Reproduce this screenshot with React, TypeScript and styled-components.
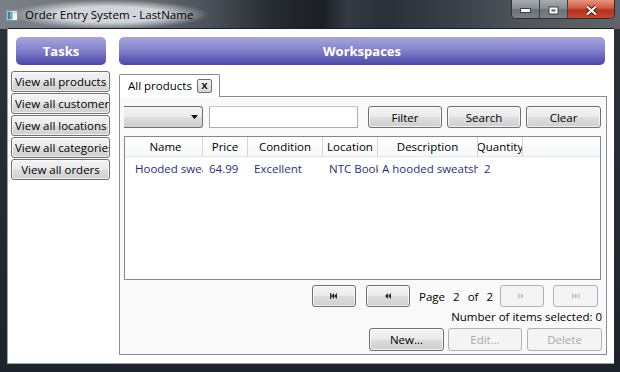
import React from "react";
import styled, { createGlobalStyle } from "styled-components";

const GlobalStyle = createGlobalStyle`
  * { box-sizing: border-box; }
  html, body { margin: 0; padding: 0; background: #1f262e; }
  body { font-family: "Open Sans", "Noto Sans", sans-serif; font-size: 11px; color: #000; }
`;

type Column = { title: string; width: number; pad: number };

const columns: Column[] = [
  { title: "Name", width: 74, pad: 6 },
  { title: "Price", width: 45, pad: 6 },
  { title: "Condition", width: 75, pad: 6 },
  { title: "Location", width: 55, pad: 6 },
  { title: "Description", width: 100, pad: 4 },
  { title: "Quantity", width: 45, pad: 6 },
];

const products = [
  ["Hooded sweatshirt", "64.99", "Excellent", "NTC Bookstore", "A hooded sweatshirt", "2"],
];

const tasks = [
  "View all products",
  "View all customers",
  "View all locations",
  "View all categories",
  "View all orders",
];

const PageIcon = ({ dir, bar, disabled }: { dir: "left" | "right"; bar: boolean; disabled?: boolean }) => {
  const c = disabled ? "#c4c4c4" : "#2a2a2a";
  const tri = dir === "left"
    ? ["M4 0 L4 6 L1 3 Z", "M7 0 L7 6 L4 3 Z"]
    : ["M0 0 L0 6 L3 3 Z", "M3 0 L3 6 L6 3 Z"];
  return (
    <svg width="8" height="6" viewBox="0 0 8 6">
      {tri.map((d) => <path key={d} d={d} fill={c} />)}
      {bar && <rect x={dir === "left" ? 0 : 6.5} y="0" width="1.2" height="6" fill={c} />}
    </svg>
  );
};

const App = () => {
  return (
    <>
      <GlobalStyle />
      <Window>
        <TitleBar>
          <AppIcon>
            <svg width="12" height="11" viewBox="0 0 12 11">
              <rect x="0.5" y="0.5" width="11" height="10" fill="#f4f6f8" stroke="#8a9096" />
              <rect x="1.5" y="1.5" width="3" height="8" fill="#3a7fb4" />
              <rect x="4.5" y="1.5" width="2" height="8" fill="#5fae8a" />
              <rect x="7" y="1.5" width="4" height="2" fill="#c9d3dc" />
            </svg>
          </AppIcon>
          <TitleText>Order Entry System - LastName</TitleText>
          <Caption>
            <CaptionButton>
              <svg width="11" height="5" viewBox="0 0 11 5">
                <rect x="0.5" y="0.5" width="10" height="4" fill="#fff" stroke="#3a4046" />
              </svg>
            </CaptionButton>
            <CaptionButton>
              <svg width="11" height="9" viewBox="0 0 11 9">
                <rect x="0.5" y="0.5" width="10" height="8" fill="#3a4046" />
                <rect x="1.5" y="1.5" width="8" height="6" fill="#fff" />
                <rect x="3.5" y="3.5" width="4" height="2" fill="#56606a" />
              </svg>
            </CaptionButton>
            <CloseButton>
              <svg width="13" height="11" viewBox="0 0 13 11">
                <path d="M2 1.5 L11 9.5 M11 1.5 L2 9.5" stroke="#4a1a10" strokeWidth="4" />
                <path d="M2 1.5 L11 9.5 M11 1.5 L2 9.5" stroke="#fff" strokeWidth="2.2" />
              </svg>
            </CloseButton>
          </Caption>
        </TitleBar>

        <Client>
          <TaskColumn>
            <Header $inset>Tasks</Header>
            <TaskList>
              {tasks.map((t) => (
                <Button key={t} $width={99} $height={21}>
                  <Label>{t}</Label>
                </Button>
              ))}
            </TaskList>
          </TaskColumn>

          <WorkColumn>
            <Header>Workspaces</Header>
            <TabStrip>
              <Tab>
                All products
                <TabClose>X</TabClose>
              </Tab>
            </TabStrip>
            <TabPanel>
              <FilterRow>
                <Combo>
                  <svg width="7" height="4" viewBox="0 0 7 4"><path d="M0 0 H7 L3.5 4 Z" fill="#000" /></svg>
                </Combo>
                <TextBox />
                <Button $width={74} $height={22} $ml={10}>Filter</Button>
                <Button $width={74} $height={22} $ml={5}>Search</Button>
                <Button $width={75} $height={22} $ml={5}>Clear</Button>
              </FilterRow>

              <Grid>
                <HeaderRow>
                  {columns.map((c) => (
                    <HeaderCell key={c.title} $width={c.width}>{c.title}</HeaderCell>
                  ))}
                </HeaderRow>
                {products.map((p) => (
                  <DataRow key={p[0]}>
                    {columns.map((c, i) => (
                      <DataCell key={c.title} $width={c.width} $pad={c.pad}>{p[i]}</DataCell>
                    ))}
                  </DataRow>
                ))}
              </Grid>

              <PagerRow>
                <Button $width={44} $height={22}><PageIcon dir="left" bar /></Button>
                <Button $width={44} $height={22} $ml={10}><PageIcon dir="left" bar={false} /></Button>
                <PageLabel>
                  <span>Page</span><span>2</span><span>of</span><span>2</span>
                </PageLabel>
                <Button $width={44} $height={22} disabled><PageIcon dir="right" bar={false} disabled /></Button>
                <Button $width={45} $height={22} $ml={9} disabled><PageIcon dir="right" bar disabled /></Button>
              </PagerRow>

              <SelectedCount>Number of items selected: 0</SelectedCount>

              <ActionRow>
                <Button $width={75} $height={23}>New...</Button>
                <Button $width={74} $height={23} $ml={4} disabled>Edit...</Button>
                <Button $width={75} $height={23} $ml={5} disabled>Delete</Button>
              </ActionRow>
            </TabPanel>
          </WorkColumn>
        </Client>
      </Window>
    </>
  );
};

export default App;

const Window = styled.div`
  width: 620px;
  height: 372px;
  display: flex;
  flex-direction: column;
  padding: 0 6px 8px 7px;
  background:
    linear-gradient(90deg, #7c8187 0%, #6a7076 22%, #4a5057 34%, #262b31 44%, #1b1f25 52%, #353b42 56%, #2a3037 62%, #3d434a 75%, #50565c 85%, #5e646a 100%) top / 100% 29px no-repeat,
    linear-gradient(180deg, #2b323a 0%, #1d242c 100%);
`;

const TitleBar = styled.div`
  height: 29px;
  display: flex;
  align-items: center;
  flex-shrink: 0;
`;

const AppIcon = styled.div`
  display: flex;
  margin-left: -1px;
  margin-top: 1px;
`;

const TitleText = styled.span`
  margin-left: -8px;
  padding: 7px 16px 7px 15px;
  font-family: "Open Sans", sans-serif;
  font-size: 11.5px;
  color: #000;
  background: radial-gradient(closest-side, rgba(214, 218, 222, 0.95) 55%, rgba(214, 218, 222, 0) 100%);
`;

const Caption = styled.div`
  margin-left: auto;
  margin-right: -1px;
  align-self: flex-start;
  display: flex;
  height: 19px;
  border: 1px solid #2b3036;
  border-top: none;
  border-radius: 0 0 5px 5px;
  overflow: hidden;
  box-shadow: inset 0 0 0 1px rgba(255, 255, 255, 0.25);
`;

const CaptionButton = styled.div`
  width: 28px;
  display: flex;
  align-items: center;
  justify-content: center;
  padding-top: 2px;
  background: linear-gradient(180deg, #a7acb1 0%, #8a9096 45%, #6b7177 55%, #7c8288 100%);
  border-right: 1px solid #3a4046;
`;

const CloseButton = styled(CaptionButton)`
  width: 46px;
  border-right: none;
  background: linear-gradient(180deg, #e6957f 0%, #cf5a3e 45%, #b3321b 55%, #c5472c 100%);
`;

const Client = styled.div`
  flex: 1;
  display: flex;
  gap: 9px;
  padding: 8px 7px 0 3px;
  background: #fff;
  border-left: 1px solid #9aa2aa;
  border-bottom: 1px solid #9aa2aa;
  border-top: 1px solid #1a1e23;
  margin-top: -1px;
`;

const TaskColumn = styled.div`
  width: 99px;
  display: flex;
  flex-direction: column;
`;

const Header = styled.div<{ $inset?: boolean }>`
  height: 28px;
  margin: ${(p) => (p.$inset ? "0 4px 0 5px" : "0 2px 0 0")};
  display: flex;
  align-items: center;
  justify-content: center;
  border-radius: 5px;
  background: linear-gradient(180deg, #a6a6de 0%, #8584cc 45%, #5f5cb5 80%, #4c48aa 100%);
  color: #fff;
  font-weight: 700;
  font-size: 13px;
  font-family: "Open Sans", sans-serif;
`;

const TaskList = styled.div`
  margin-top: 6px;
  display: flex;
  flex-direction: column;
  gap: 1px;
`;

const Button = styled.button<{ $width: number; $height: number; $ml?: number }>`
  width: ${(p) => p.$width}px;
  height: ${(p) => p.$height}px;
  margin: 0 0 0 ${(p) => p.$ml ?? 0}px;
  padding: 0;
  flex-shrink: 0;
  display: flex;
  align-items: center;
  justify-content: center;
  overflow: hidden;
  white-space: nowrap;
  font-family: "Open Sans", sans-serif;
  font-size: 11.5px;
  color: #000;
  border: 1px solid #707070;
  border-radius: 3px;
  background: linear-gradient(180deg, #f3f3f3 0%, #ebebeb 48%, #dddddd 52%, #cfcfcf 100%);
  box-shadow: inset 0 0 0 1px rgba(255, 255, 255, 0.7);

  &:disabled {
    color: #a8a8a8;
    border-color: #adb2b5;
    background: #f4f4f4;
    box-shadow: none;
  }
`;

const Label = styled.span`
  display: block;
  width: 100%;
  padding: 0 3px;
  text-align: center;
  overflow: hidden;
  white-space: nowrap;
`;

const WorkColumn = styled.div`
  flex: 1;
  display: flex;
  flex-direction: column;
`;

const TabStrip = styled.div`
  margin-top: 9px;
  display: flex;
  height: 22px;
`;

const Tab = styled.div`
  position: relative;
  z-index: 1;
  width: 101px;
  height: 23px;
  display: flex;
  align-items: center;
  padding: 0 0 1px 8px;
  gap: 5px;
  font-size: 11.5px;
  border: 1px solid #898c95;
  border-bottom: none;
  border-radius: 2px 2px 0 0;
  background: #fff;
`;

const TabClose = styled.span`
  width: 15px;
  height: 14px;
  display: flex;
  align-items: center;
  justify-content: center;
  font-weight: 700;
  font-size: 9px;
  border: 1px solid #707070;
  border-radius: 2px;
  background: linear-gradient(180deg, #f3f3f3 0%, #e6e6e6 50%, #d5d5d5 100%);
`;

const TabPanel = styled.div`
  height: 259px;
  display: flex;
  flex-direction: column;
  padding: 9px 4px 3px 4px;
  border: 1px solid #898c95;
  background: #f9f9f9;
`;

const FilterRow = styled.div`
  display: flex;
  height: 22px;
`;

const Combo = styled.div`
  width: 79px;
  height: 22px;
  display: flex;
  align-items: center;
  justify-content: flex-end;
  padding-right: 4px;
  border: 1px solid #707070;
  border-left: none;
  border-radius: 0 3px 3px 0;
  background: linear-gradient(180deg, #f3f3f3 0%, #ebebeb 48%, #dddddd 52%, #cfcfcf 100%);
`;

const TextBox = styled.div`
  width: 149px;
  margin-left: 6px;
  height: 22px;
  border: 1px solid #abadb3;
  border-top-color: #c5c8cf;
  background: #fff;
`;

const Grid = styled.div`
  margin-top: 8px;
  height: 144px;
  margin-right: 1px;
  border: 1px solid #828790;
  background: #fff;
`;

const HeaderRow = styled.div`
  display: flex;
  height: 20px;
  padding-left: 4px;
  border-bottom: 1px solid #e3e5e8;
  background: linear-gradient(180deg, #ffffff 0%, #f7f8f9 100%);
`;

const HeaderCell = styled.div<{ $width: number }>`
  width: ${(p) => p.$width}px;
  flex-shrink: 0;
  display: flex;
  align-items: center;
  justify-content: center;
  overflow: hidden;
  white-space: nowrap;
  font-size: 11.5px;
  border-right: 1px solid #d5d5d5;
`;

const DataRow = styled.div`
  display: flex;
  height: 21px;
  padding-left: 4px;
`;

const DataCell = styled.div<{ $width: number; $pad: number }>`
  width: ${(p) => p.$width}px;
  flex-shrink: 0;
  padding: 2px 0 0 ${(p) => p.$pad}px;
  display: block;
  line-height: 19px;
  overflow: hidden;
  white-space: nowrap;
  font-size: 11.5px;
  color: #1f2f86;
`;

const PagerRow = styled.div`
  margin-top: 5px;
  height: 22px;
  display: flex;
  justify-content: flex-end;
  padding-right: 4px;
`;

const PageLabel = styled.div`
  display: flex;
  align-items: center;
  gap: 8px;
  margin: 0 7px 0 9px;
  font-size: 11.5px;
`;

const SelectedCount = styled.div`
  margin-top: 2px;
  height: 16px;
  text-align: right;
  font-size: 11.5px;
  line-height: 16px;
`;

const ActionRow = styled.div`
  margin-top: 3px;
  display: flex;
  justify-content: flex-end;
`;
